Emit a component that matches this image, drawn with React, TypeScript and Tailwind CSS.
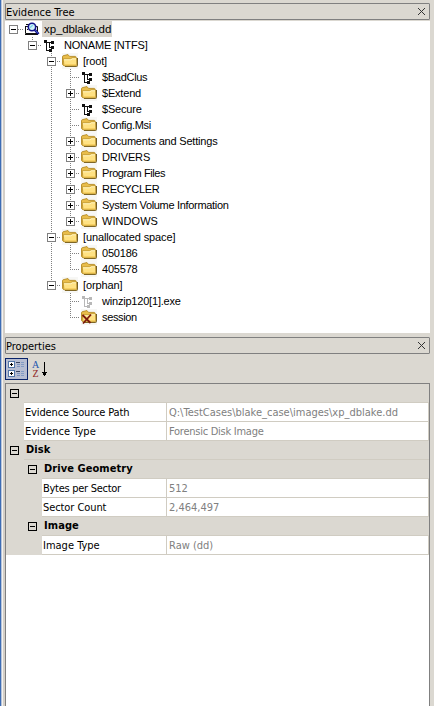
import React from "react";

type Kind = "image" | "node" | "faded" | "folder" | "deleted";
type Guide = "none" | "line" | "tee" | "end" | "minus" | "minusEnd" | "plus" | "plusEnd";

interface TreeRow {
  label: string;
  kind: Kind;
  guides: Guide[];
  spacing?: string;
}

const rows: TreeRow[] = [
  { label: "xp_dblake.dd", kind: "image", guides: ["none"], spacing: "tracking-[-0.1px]" },
  { label: "NONAME [NTFS]", kind: "node", guides: ["none", "minusEnd"], spacing: "tracking-[-0.2px]" },
  { label: "[root]", kind: "folder", guides: ["none", "none", "minus"] },
  { label: "$BadClus", kind: "node", guides: ["none", "none", "line", "tee"], spacing: "tracking-[-0.3px]" },
  { label: "$Extend", kind: "folder", guides: ["none", "none", "line", "plus"] },
  { label: "$Secure", kind: "node", guides: ["none", "none", "line", "tee"] },
  { label: "Config.Msi", kind: "folder", guides: ["none", "none", "line", "tee"], spacing: "tracking-[-0.3px]" },
  { label: "Documents and Settings", kind: "folder", guides: ["none", "none", "line", "plus"] },
  { label: "DRIVERS", kind: "folder", guides: ["none", "none", "line", "plus"], spacing: "tracking-[-0.1px]" },
  { label: "Program Files", kind: "folder", guides: ["none", "none", "line", "plus"], spacing: "tracking-[-0.42px]" },
  { label: "RECYCLER", kind: "folder", guides: ["none", "none", "line", "plus"], spacing: "tracking-[-0.3px]" },
  { label: "System Volume Information", kind: "folder", guides: ["none", "none", "line", "plus"], spacing: "tracking-[-0.32px]" },
  { label: "WINDOWS", kind: "folder", guides: ["none", "none", "line", "plusEnd"], spacing: "tracking-[0.05px]" },
  { label: "[unallocated space]", kind: "folder", guides: ["none", "none", "minus"], spacing: "tracking-[-0.13px]" },
  { label: "050186", kind: "folder", guides: ["none", "none", "line", "tee"] },
  { label: "405578", kind: "folder", guides: ["none", "none", "line", "end"] },
  { label: "[orphan]", kind: "folder", guides: ["none", "none", "minusEnd"], spacing: "tracking-[-0.1px]" },
  { label: "winzip120[1].exe", kind: "faded", guides: ["none", "none", "none", "tee"] },
  { label: "session", kind: "deleted", guides: ["none", "none", "none", "end"], spacing: "tracking-[-0.35px]" },
];

function GuideCell({ type }: { type: Guide }) {
  const boxed = type.startsWith("minus") || type.startsWith("plus");
  const ends = type.endsWith("End") || type === "end";
  return (
    <svg width="19" height="16" className="shrink-0" shapeRendering="crispEdges">
      {type !== "none" && (
        <path d={ends ? "M9.5 0V9" : "M9.5 0V16"} stroke="#808080" strokeDasharray="1 1" />
      )}
      {type !== "none" && type !== "line" && (
        <path d="M9 8.5H19" stroke="#808080" strokeDasharray="1 1" />
      )}
      {boxed && (
        <>
          <rect x="5.5" y="4.5" width="8" height="8" fill="#fff" stroke="#808080" />
          <path d="M7 8.5H12" stroke="#000" />
          {type.startsWith("plus") && <path d="M9.5 6V11" stroke="#000" />}
        </>
      )}
    </svg>
  );
}

function RootCell() {
  return (
    <svg width="19" height="16" className="shrink-0" shapeRendering="crispEdges">
      <path d="M14 8.5H19" stroke="#808080" strokeDasharray="1 1" />
      <rect x="5.5" y="4.5" width="8" height="8" fill="#fff" stroke="#808080" />
      <path d="M7 8.5H12" stroke="#000" />
    </svg>
  );
}

function TreeIcon({ kind }: { kind: Kind }) {
  if (kind === "image") {
    return (
      <svg width="19" height="16" className="shrink-0">
        <path d="M2.5 5.5H14.5V12.5H2.5Z" fill="#fff" stroke="#111" />
        <path d="M2 13.5H15M3 3.5H6M2.5 5V7M4 8.5H5" stroke="#111" />
        <circle cx="9" cy="6" r="3.7" fill="#d3f4fb" stroke="#15158c" strokeWidth="1.6" />
        <path d="M7 6.8L9.8 4" stroke="#7fd3ea" strokeWidth="1.4" />
        <path d="M11.6 8.6L15.6 13" stroke="#15158c" strokeWidth="2.4" />
        <path d="M12.4 9.2L14.8 12" stroke="#5c7be0" strokeWidth="0.7" />
      </svg>
    );
  }
  if (kind === "node" || kind === "faded") {
    const color = kind === "node" ? "#111" : "#b8b8b8";
    return (
      <svg width="19" height="16" className="shrink-0" shapeRendering="crispEdges" fill={color}>
        <path d="M2 3h3v3H2zM4 6h1v8H4zM5 5h4v1H5zM7 5h1v6H7zM7 10h2v1H7zM9 4h3v3H9zM9 9h3v3H9zM5 13h2v1H5zM7 12h3v3H7z" />
      </svg>
    );
  }
  return (
    <svg width="19" height="16" className="shrink-0">
      <rect x="1" width="16" height="16" fill="#f7f7f5" />
      <path d="M4 13.5H15.5Q16.5 13.5 16.5 12.5V5" fill="none" stroke="#6d5a26" />
      <path d="M1.5 11.5V3.6Q1.5 2.8 3 2.5L7 1.6L8.5 3.4H14.3Q15 3.4 15 4.4V12.5H2.5Z" fill="#e9bd4a" stroke="#b38a25" strokeWidth="0.9" />
      <path d="M2.2 5.8H9.5L11 4.8H15.5L15.8 12.8H3Z" fill="#ffe283" stroke="#b98f28" strokeWidth="0.8" />
      <path d="M3 6.8H10L11.3 5.8H15" fill="none" stroke="#fff6c6" strokeWidth="0.9" />
      <path d="M3.4 11.8H15" stroke="#f5cb58" />
      {kind === "deleted" && (
        <path d="M2.5 6L10.5 14M11 5.5L3 14.5" stroke="#7c1a0c" strokeWidth="1.8" fill="none" />
      )}
    </svg>
  );
}

function PanelTitle({ children }: { children: React.ReactNode }) {
  return (
    <div className="flex h-[17px] shrink-0 items-center justify-between rounded-[1px] border border-[#808080] pr-[4px]">
      <span className="pt-px text-[11px] leading-[15px]">{children}</span>
      <svg width="7" height="7" shapeRendering="crispEdges" fill="#333">
        <path d="M0 0h1v1H0zM1 1h1v1H1zM2 2h1v1H2zM3 3h1v1H3zM4 4h1v1H4zM5 5h1v1H5zM6 6h1v1H6zM6 0h1v1H6zM5 1h1v1H5zM4 2h1v1H4zM2 4h1v1H2zM1 5h1v1H1zM0 6h1v1H0z" />
      </svg>
    </div>
  );
}

function Minus() {
  return (
    <svg width="9" height="9" className="shrink-0" shapeRendering="crispEdges">
      <rect x="0.5" y="0.5" width="8" height="8" fill="none" stroke="#000" />
      <path d="M2 4.5H7" stroke="#000" />
    </svg>
  );
}

function Category({ label, nested }: { label: string; nested?: boolean }) {
  return (
    <div className={nested ? "flex h-[19px] pl-[18px]" : "flex h-[19px]"}>
      <div className="flex w-[18px] items-center pl-[4px]">
        <Minus />
      </div>
      <div className="flex flex-1 items-center border-b border-[#d0ccc2] pl-[2px] text-[11px] leading-[18px] font-bold tracking-[0.07px]">
        {label}
      </div>
    </div>
  );
}

interface PropertyProps {
  label: string;
  value: string;
  nested?: boolean;
  labelSpacing?: string;
  valueSpacing?: string;
}

function Property({ label, value, nested, labelSpacing = "", valueSpacing = "" }: PropertyProps) {
  return (
    <div className={nested ? "flex h-[19px] pl-[36px]" : "flex h-[19px] pl-[18px]"}>
      <div className="flex flex-1 border-r border-b border-[#d0ccc2] bg-white text-[11px] leading-[18px] whitespace-nowrap">
        <div className={nested ? "w-[125px] border-r border-[#d0ccc2] pt-px pl-[1px]" : "w-[143px] border-r border-[#d0ccc2] pt-px pl-[1px]"}>
          <span className={`block h-[17px] ${labelSpacing}`}>{label}</span>
        </div>
        <div className="pt-px pl-[2px] text-[#808080]">
          <span className={`block h-[17px] ${valueSpacing}`}>{value}</span>
        </div>
      </div>
    </div>
  );
}

function CategorizedIcon() {
  return (
    <svg width="17" height="16" shapeRendering="crispEdges">
      {[1, 10].map((y) => (
        <g key={y}>
          <rect x="0.5" y={y - 0.5} width="6" height="6" rx="1" fill="#fff" stroke="#5477a8" />
          <path d={`M2 ${y + 2.5}h3M3.5 ${y + 1}v3`} stroke="#000" />
          <path d={`M8 ${y + 0.5}h4`} stroke="#3b4560" />
          <path d={`M9 ${y + 2.5}h3M9 ${y + 4.5}h3`} stroke="#7c93bf" />
          <path d={`M13 ${y + 0.5}h3M13 ${y + 2.5}h3M13 ${y + 4.5}h3`} stroke="#829bc4" />
        </g>
      ))}
    </svg>
  );
}

export default function App() {
  return (
    <div className="flex h-[706px] w-[434px] overflow-hidden bg-[#dbd8d1] text-black">
      <div className="w-px bg-[#3d6cb4]" />
      <div className="w-px bg-[#b8c4d8]" />
      <div className="w-px bg-[#f4f2ee]" />
      <div className="w-[2px] bg-[#d4cfc8]" />
      <div className="flex w-[425px] flex-col pt-[3px] font-['DejaVu_Sans_Condensed','DejaVu_Sans',sans-serif]">
        <PanelTitle>Evidence Tree</PanelTitle>
        <div className="mt-px h-[312px] shrink-0 bg-white font-['Liberation_Sans',Arial,sans-serif]">
          {rows.map((row) => (
            <div key={row.label} className="-ml-px flex h-[16px]">
              {row.kind === "image" ? <RootCell /> : row.guides.map((g, i) => <GuideCell key={i} type={g} />)}
              <TreeIcon kind={row.kind} />
              <span
                className={`whitespace-nowrap leading-[17px] ${
                  row.kind === "image" ? "bg-[#d8d4cc] pr-px pl-[2px] text-[11.5px]" : "pl-[3px] text-[11px]"
                } ${row.spacing ?? "tracking-[-0.2px]"}`}
              >
                {row.label}
              </span>
            </div>
          ))}
        </div>
        <div className="mt-[4px] flex flex-col">
          <PanelTitle>Properties</PanelTitle>
        </div>
        <div className="flex h-[29px] shrink-0 items-center">
          <div className="flex h-[22px] w-[23px] items-center justify-center border border-[#0a246a] bg-[#b6bdd2]">
            <CategorizedIcon />
          </div>
          <div className="ml-[4px] flex h-[18px] w-[7px] flex-col items-center font-['Liberation_Serif',serif] text-[10px] leading-[9px]">
            <span className="block h-[9px] text-[#2456ae]">A</span>
            <span className="block h-[9px] text-[#8e2525]">Z</span>
          </div>
          <svg width="7" height="16" className="ml-[2px]" shapeRendering="crispEdges">
            <path d="M3 1h1v14H3zM1 11h5v1H1zM2 12h3v2H2z" fill="#000" />
          </svg>
        </div>
        <div className="flex flex-1 flex-col border-t border-r border-l border-[#808080] bg-white">
          <div className="bg-[#dbd8d1]">
            <Category label="" />
            <Property
              label="Evidence Source Path"
              value={"Q:\\TestCases\\blake_case\\images\\xp_dblake.dd"}
              labelSpacing="tracking-[-0.13px]"
            />
            <Property label="Evidence Type" value="Forensic Disk Image" valueSpacing="tracking-[-0.26px]" />
            <Category label="Disk" />
            <Category label="Drive Geometry" nested />
            <Property label="Bytes per Sector" value="512" nested labelSpacing="tracking-[-0.28px]" />
            <Property label="Sector Count" value="2,464,497" nested labelSpacing="tracking-[-0.08px]" />
            <Category label="Image" nested />
            <Property label="Image Type" value="Raw (dd)" nested />
          </div>
        </div>
      </div>
    </div>
  );
}
